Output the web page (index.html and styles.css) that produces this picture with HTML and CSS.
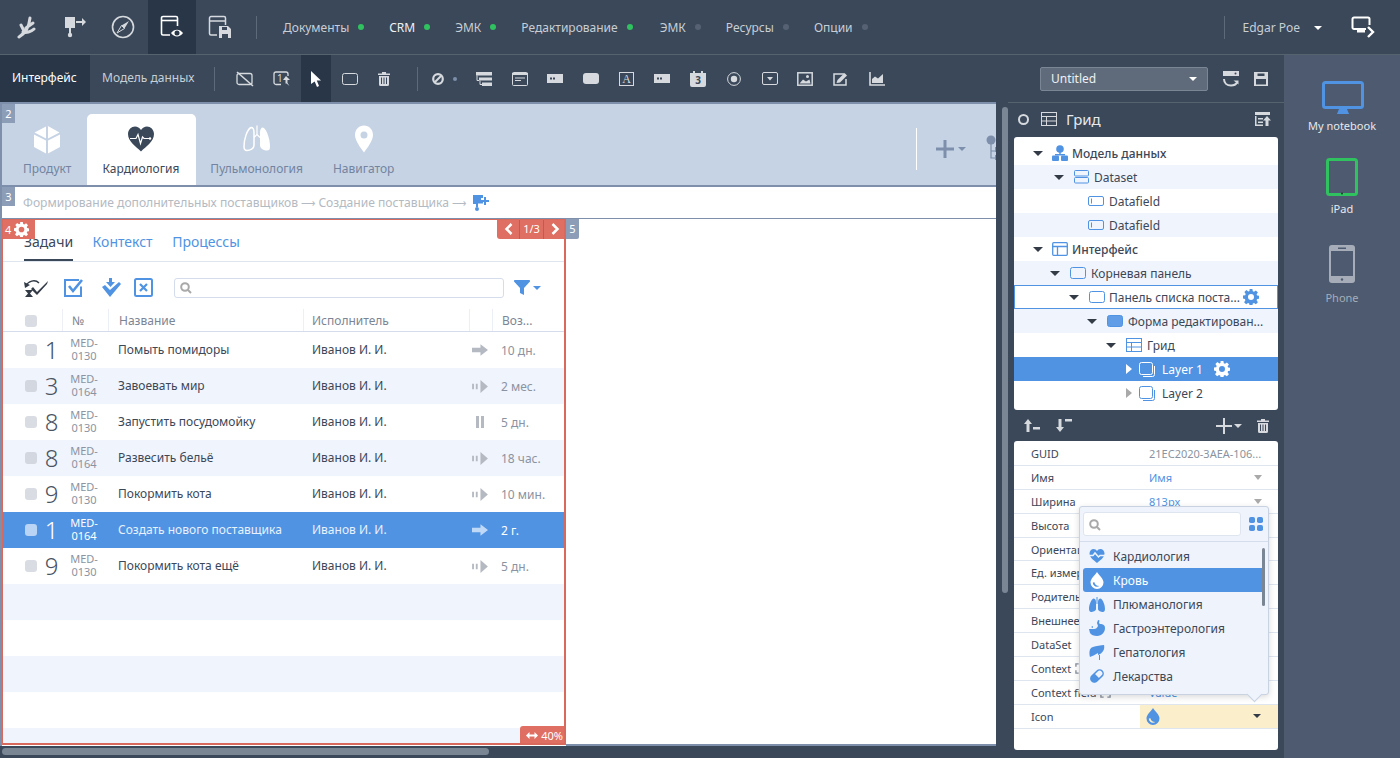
FILE: index.html
```html
<!DOCTYPE html>
<html lang="ru">
<head>
    <meta charset="UTF-8">
    <title>Редактор интерфейса</title>
    <link rel="stylesheet" href="styles.css">
</head>
<body>
<svg class="sprite" xmlns="http://www.w3.org/2000/svg">
    <symbol id="i-panel" viewBox="0 0 16 12"><rect x="0.5" y="0.5" width="15" height="11" rx="2" fill="none" stroke="currentColor"/></symbol>
    <symbol id="i-field" viewBox="0 0 16 10"><rect x="0.5" y="0.5" width="15" height="9" rx="1.5" fill="none" stroke="currentColor"/><path d="M3.5 2.5v5" stroke="currentColor"/></symbol>
    <symbol id="i-layer" viewBox="0 0 16 15"><rect x="0.5" y="0.5" width="13" height="12" rx="2" fill="none" stroke="currentColor"/><path d="M15.5 4v8.500a2 2 0 0 1-2 2H4" fill="none" stroke="currentColor"/></symbol>
    <symbol id="i-grid" viewBox="0 0 16 14"><rect x="0.5" y="0.5" width="15" height="13" fill="none" stroke="currentColor"/><path d="M0 4.500h16M0 9h16M5.500 4.500V14" stroke="currentColor"/></symbol>
    <symbol id="i-gear" viewBox="0 0 16 16"><path fill-rule="evenodd" fill="currentColor" d="M6.600 0h2.800l.4 2.200 1.200.5 1.900-1.300 2 2-1.300 1.900.5 1.200 2.200.4v2.800l-2.200.4-.5 1.200 1.300 1.900-2 2-1.900-1.300-1.200.5-.4 2.200H6.600l-.4-2.200-1.200-.5-1.900 1.300-2-2 1.300-1.900-.5-1.200L0 9.400V6.600l2.200-.4.5-1.200L1.400 3.100l2-2 1.900 1.300 1.200-.5zM8 5a3 3 0 1 0 0 6 3 3 0 0 0 0-6z"/></symbol>
    <symbol id="i-search" viewBox="0 0 12 12"><circle cx="5" cy="5" r="3.800" fill="none" stroke="currentColor" stroke-width="2"/><path d="M8 8l3 3" stroke="currentColor" stroke-width="2"/></symbol>
    <symbol id="i-drop" viewBox="0 0 14 17"><path fill-rule="evenodd" fill="currentColor" d="M7 0c2 3.500 6.500 6.500 6.500 10.500a6.500 6.500 0 0 1-13 0C.5 6.500 5 3.500 7 0zM2.800 10.500c0 2.600 1.900 4.300 4.200 4.300.9 0 1.700-.3 2.300-.8-2.800-.1-4.500-1.500-4.900-3.700z"/></symbol>
    <symbol id="i-move" viewBox="0 0 17 12"><path fill="currentColor" d="M0 3.500h9V0l8 6-8 6V8.500H0z"/></symbol>
    <symbol id="i-slow" viewBox="0 0 17 14"><path fill="currentColor" d="M0 4h2v6H0zM4 4h2v6H4zM9 0l8 7-8 7z"/></symbol>
    <symbol id="i-pause" viewBox="0 0 10 12"><path fill="currentColor" d="M1 0h3v12H1zM6 0h3v12H6z"/></symbol>
    <symbol id="i-trash" viewBox="0 0 12 14"><path fill="currentColor" d="M4 0h4v1.500h4V3H0V1.500h4zM1 4h10v8.500a1.500 1.500 0 0 1-1.500 1.500h-7A1.500 1.500 0 0 1 1 12.500zm2 1.500V12h1V5.500zm2.500 0V12h1V5.500zm2.500 0V12h1V5.500z"/></symbol>
    <symbol id="i-chip" viewBox="0 0 16 9"><path fill-rule="evenodd" fill="currentColor" d="M0 0h16v9H0zM3 3.500v2h2v-2zm3 0v2h2v-2z"/></symbol>
    <symbol id="i-bracket" viewBox="0 0 12 12"><path d="M4 1H1v3M8 1h3v3M4 11H1V8M8 11h3V8" fill="none" stroke="currentColor" stroke-width="1.500"/></symbol>
</svg>

<header class="topbar">
    <div class="ico-btn"><svg width="22" height="24" viewBox="0 0 22 24" fill="none" stroke="#d6dade" stroke-width="3" stroke-linecap="round"><path d="M3 22c5-3 10-9 11-19M10 13l7-5M7 17c3 1 8 0 11-3M5 10l3 6"/></svg></div>
    <div class="ico-btn"><svg width="24" height="24" viewBox="0 0 24 24" fill="#d6dade"><path d="M2 2h10v11H2z"/><path d="M6 13h2v6H6z"/><circle cx="7" cy="20" r="2.200"/><path d="M13 6h6V3l4 4-4 4V8h-6z"/></svg></div>
    <div class="ico-btn"><svg width="24" height="24" viewBox="0 0 24 24"><circle cx="12" cy="12" r="10.500" fill="none" stroke="#d6dade" stroke-width="1.600"/><path d="M18 6l-4.500 7.500L10.500 10.500z" fill="#d6dade"/><path d="M6 18l4.500-7.500 3 3z" fill="none" stroke="#d6dade"/></svg></div>
    <div class="ico-btn is-active"><svg width="24" height="24" viewBox="0 0 24 24" fill="none" stroke="#fff" stroke-width="1.600"><path d="M10 20H3a1.500 1.500 0 0 1-1.500-1.500V3A1.500 1.500 0 0 1 3 1.500h13A1.500 1.500 0 0 1 17.500 3v8"/><path d="M2 5.500h15"/><path d="M11 18c3-4.500 9-4.500 12 0-3 4.500-9 4.500-12 0z" fill="#fff" stroke="none"/><circle cx="17" cy="18" r="2.500" fill="#283648" stroke="none"/></svg></div>
    <div class="ico-btn"><svg width="24" height="24" viewBox="0 0 24 24" fill="none" stroke="#d6dade" stroke-width="1.500"><path d="M9 20H3a1.500 1.500 0 0 1-1.500-1.500V3A1.500 1.500 0 0 1 3 1.500h13A1.500 1.500 0 0 1 17.500 3v7"/><path d="M2 6h15"/><path d="M11 11h9l3 3v9H11z" fill="#d6dade" stroke="none"/><path d="M14 12h5v3h-5zM14 19h6v4h-6z" fill="#3a4859" stroke="none"/></svg></div>
    <div class="vline top-line"></div>
    <nav class="modules">
        <a class="module">Документы<i class="dot on"></i></a>
        <a class="module is-lit">CRM<i class="dot on"></i></a>
        <a class="module">ЭМК<i class="dot on"></i></a>
        <a class="module">Редактирование<i class="dot on"></i></a>
        <a class="module">ЭМК<i class="dot"></i></a>
        <a class="module">Ресурсы<i class="dot"></i></a>
        <a class="module">Опции<i class="dot"></i></a>
    </nav>
    <div class="user">
        <div class="vline"></div>
        <span class="user-name">Edgar Poe</span>
        <i class="caret"></i>
        <svg class="logout" width="24" height="24" viewBox="0 0 24 24" fill="none" stroke="#fff" stroke-width="2"><path d="M15 14H3a1.500 1.500 0 0 1-1.500-1.500V4A1.500 1.500 0 0 1 3 2.500h14A1.500 1.500 0 0 1 18.500 4v6"/><path d="M6 16h8" stroke-width="3"/><path d="M17 12l5 5-5 5" stroke-width="2.400"/></svg>
    </div>
</header>

<div class="workspace">
    <div class="editor">
        <div class="toolbar">
            <a class="mode is-active">Интерфейс</a>
            <a class="mode">Модель данных</a>
            <div class="vline"></div>
            <div class="tool t-first"><svg width="18" height="16" viewBox="0 0 18 16" fill="none" stroke="#d6dade" stroke-width="1.300"><rect x="1" y="2.500" width="15" height="11" rx="2"/><path d="M1 1l16 14" stroke-width="1.600"/></svg></div>
            <div class="tool t-second"><svg width="18" height="16" viewBox="0 0 18 16" fill="none" stroke="#d6dade" stroke-width="1.300"><path d="M8 13.500H3a2 2 0 0 1-2-2V3a2 2 0 0 1 2-2h10a2 2 0 0 1 2 2v2"/><text x="4" y="10.500" class="ico-text" fill="#d6dade" stroke="none">1</text><path d="M13 5l4 4h-2.500v3l2 3-3-2.500h-1V9H10z" fill="#d6dade" stroke="none"/></svg></div>
            <div class="tool is-active"><svg width="12" height="16" viewBox="0 0 12 16" fill="#fff"><path d="M1 0l10 9.500H6.800L9 15l-2 1-2.300-5.500L1 13z"/></svg></div>
            <div class="tool"><svg class="c-light" width="16" height="12"><use href="#i-panel"/></svg></div>
            <div class="tool"><svg class="c-light" width="12" height="14"><use href="#i-trash"/></svg></div>
            <div class="vline vline-tools"></div>
            <div class="tool-ban"><svg width="12" height="12" viewBox="0 0 12 12"><circle cx="6" cy="6" r="4.800" fill="none" stroke="#d6dade" stroke-width="2.200"/><path d="M3 9l6-6" stroke="#d6dade" stroke-width="2"/></svg><i class="mini-dot"></i></div>
            <div class="tool-row">
                <div class="tool"><svg width="16" height="14" viewBox="0 0 16 14" fill="#d6dade"><path d="M0 0h16v3.500H0zM3 5.500h13V8.500H3zM6 10.500h10V14H6z"/><path d="M1 3.500v5h2M4 8.500v4h2" fill="none" stroke="#d6dade"/></svg></div>
                <div class="tool"><svg width="16" height="14" viewBox="0 0 16 14" fill="none" stroke="#d6dade"><rect x="0.500" y="0.500" width="15" height="13" rx="1"/><path d="M0 2h16" stroke-width="2"/><path d="M3 6h10M3 8.500h6"/></svg></div>
                <div class="tool"><svg class="c-light" width="16" height="9"><use href="#i-chip"/></svg></div>
                <div class="tool"><svg width="16" height="11" viewBox="0 0 16 11" fill="#d6dade"><rect width="16" height="11" rx="3"/></svg></div>
                <div class="tool"><svg width="15" height="14" viewBox="0 0 15 14"><rect x="0.500" y="0.500" width="14" height="13" fill="none" stroke="#d6dade"/><text x="7.500" y="11" text-anchor="middle" class="ico-serif" fill="#d6dade">A</text></svg></div>
                <div class="tool"><svg class="c-light" width="16" height="9"><use href="#i-chip"/></svg></div>
                <div class="tool"><svg width="16" height="16" viewBox="0 0 16 16" fill="#d6dade"><path d="M0 2h3V0h2v2h6V0h2v2h3v12a2 2 0 0 1-2 2H2a2 2 0 0 1-2-2z"/><text x="8" y="13" text-anchor="middle" class="ico-text" fill="#3a4859" font-weight="700">3</text></svg></div>
                <div class="tool"><svg width="14" height="14" viewBox="0 0 14 14"><circle cx="7" cy="7" r="6.400" fill="none" stroke="#d6dade"/><circle cx="7" cy="7" r="3.200" fill="#d6dade"/></svg></div>
                <div class="tool"><svg width="16" height="13" viewBox="0 0 16 13"><rect x="0.500" y="0.500" width="15" height="12" rx="1.500" fill="none" stroke="#d6dade"/><path d="M5 5h6L8 8.500z" fill="#d6dade"/></svg></div>
                <div class="tool"><svg width="16" height="14" viewBox="0 0 16 14"><rect x="0.800" y="0.800" width="14.400" height="12.400" fill="none" stroke="#d6dade" stroke-width="1.500"/><path d="M2.500 11.500l3.500-4 3 2 3.500-2 1 4z" fill="#d6dade"/><circle cx="10.500" cy="4.500" r="1.500" fill="#d6dade"/></svg></div>
                <div class="tool"><svg width="16" height="14" viewBox="0 0 16 14"><path d="M11 2H1v11h12V7" fill="none" stroke="#d6dade" stroke-width="1.500"/><path d="M3.500 11l1-3 7-7 2.500 2.500-7 7z" fill="#d6dade"/></svg></div>
                <div class="tool"><svg width="16" height="14" viewBox="0 0 16 14"><path d="M1 0v13h15" fill="none" stroke="#d6dade" stroke-width="1.600"/><path d="M3 11V7l3-2.500 3 2L14 2v9z" fill="#d6dade"/></svg></div>
            </div>
            <div class="doc-tools">
                <div class="doc-select">Untitled<i class="caret"></i></div>
                <svg width="16" height="16" viewBox="0 0 16 16" fill="none" stroke="#d6dade"><path d="M0 0h16v5H0z" fill="#d6dade" stroke="none"/><circle cx="12.500" cy="2.500" r="1" fill="#3a4859" stroke="none"/><path d="M1 8c0 4 3 6.500 7 6.500 2.500 0 5-1 6-3" stroke-width="2"/><path d="M10.500 9.500h5v4z" fill="#d6dade" stroke="none"/></svg>
                <svg width="14" height="14" viewBox="0 0 14 14" fill="#d6dade"><path fill-rule="evenodd" d="M0 0h14v14H0zM3.500 1.500V4h7V1.500zM2 7v5.500h10V7z"/></svg>
            </div>
        </div>

        <div class="stage">
            <main class="canvas">
                <section class="ribbon">
                    <span class="tag">2</span>
                    <a class="app-tab tab-product">
                        <svg width="28" height="28" viewBox="0 0 28 28" fill="#fff"><path d="M14 0l12.500 7L15 13V1zM1.500 7L13 1v12zM1 9l12 6v13L1 21.500zM27 9v12.500L15 28V15z"/></svg>
                        Продукт
                    </a>
                    <a class="app-tab is-active">
                        <svg width="28" height="28" viewBox="0 0 28 28"><path d="M14 26C9 21 1 16 1 8.500 1 4 4.500 1 8 1c2.500 0 4.500 1.200 6 3.500C15.500 2.200 17.500 1 20 1c3.500 0 7 3 7 7.500C27 16 19 21 14 26z" fill="#3a4859"/><path d="M3 13h6l2-4 2.500 9 2-6.500 1.500 1.500h6" fill="none" stroke="#fff" stroke-width="1.200"/><circle cx="23" cy="13" r="1.200" fill="#fff"/></svg>
                        Кардиология
                    </a>
                    <a class="app-tab tab-pulmo">
                        <svg width="28" height="28" viewBox="0 0 28 28"><path d="M8 2C4 4 1 14 1 21c0 3 1 4 3 4 3 0 7-2 7-5V7C11 4 10 2 8 2z" fill="none" stroke="#fff" stroke-width="1.500"/><path d="M20 2c4 2 7 12 7 19 0 3-1 4-3 4-3 0-7-2-7-5V7c0-3 1-5 3-5z" fill="#fff"/><path d="M14 0v9l-3 3M14 9l3 3" fill="none" stroke="#fff" stroke-width="1.200"/></svg>
                        Пульмонология
                    </a>
                    <a class="app-tab">
                        <svg width="20" height="28" viewBox="0 0 20 28"><path fill-rule="evenodd" fill="#fff" d="M10 0c5 0 9 4 9 9.500C19 15 13 23 10 27 7 23 1 15 1 9.500 1 4 5 0 10 0zm0 6a3.500 3.500 0 1 0 0 7 3.500 3.500 0 0 0 0-7z"/></svg>
                        Навигатор
                    </a>
                    <div class="ribbon-tools">
                        <i class="ribbon-line"></i>
                        <svg width="20" height="20" viewBox="0 0 20 20" fill="#7d8fab"><path d="M8.500 1h3v7.500H19v3h-7.500V19h-3v-7.500H1v-3h7.500z"/></svg>
                        <i class="caret caret-sm"></i>
                        <svg class="ribbon-tree" width="18" height="26" viewBox="0 0 18 26" fill="none" stroke="#7d8fab" stroke-width="1.200"><circle cx="5" cy="5" r="4.500" fill="#7d8fab" stroke="none"/><path d="M5 9v14h6M5 16h6"/><path d="M9 12h6v5H9zM9 20h6v5H9z" fill="#7d8fab" stroke="none"/></svg>
                    </div>
                </section>

                <section class="crumbs">
                    <span class="tag">3</span>
                    <span>Формирование дополнительных поставщиков <span class="arrow">⟶</span> Создание поставщика <span class="arrow">⟶</span></span>
                    <svg class="crumb-icon" width="16" height="16" viewBox="0 0 16 16" fill="#5093e3"><path d="M0 0h10v3H8v3h2v2.500H5V12H3V9H0z"/><path d="M11 2h2v3h3v2h-3v3h-2V7H8V5h3z"/><circle cx="4" cy="14" r="2"/></svg>
                </section>

                <div class="split">
                    <section class="tasks">
                        <div class="tag tag-red tag-gear">4 <svg width="15" height="15"><use href="#i-gear"/></svg></div>
                        <div class="pager">
                            <span class="pager-btn"><svg width="9" height="12" viewBox="0 0 9 12" fill="none" stroke="#fff" stroke-width="2.500"><path d="M7.500 1l-5 5 5 5"/></svg></span>
                            <span class="pager-num">1/3</span>
                            <span class="pager-btn"><svg width="9" height="12" viewBox="0 0 9 12" fill="none" stroke="#fff" stroke-width="2.500"><path d="M1.500 1l5 5-5 5"/></svg></span>
                        </div>
                        <div class="tabs">
                            <a class="tab is-active">Задачи</a>
                            <a class="tab">Контекст</a>
                            <a class="tab">Процессы</a>
                        </div>
                        <div class="actions">
                            <svg width="26" height="20" viewBox="0 0 26 20"><path d="M2 8c2-5 9-7 13-3" fill="none" stroke="#333b47" stroke-width="1.500"/><path d="M0 4l1 6 5-3z" fill="#333b47"/><path d="M1 12h8L6 15.500 9 19H1l3-3.500z" fill="#333b47"/><path d="M9 9l4 5 11-11-1 3-10 11-6-6z" fill="#333b47"/></svg>
                            <svg width="22" height="20" viewBox="0 0 22 20" fill="none" stroke="#5093e3" stroke-width="2"><path d="M18 8.500V18H2V2h14"/><path d="M6 8l4 5 9-11" stroke-width="2.600"/></svg>
                            <svg width="20" height="20" viewBox="0 0 20 20" fill="#5093e3"><path d="M8 0h3v4h3l-4.500 5L5 4h3z"/><path d="M1 9l3-2 5 5 9-8 2 2-11 13z"/></svg>
                            <svg width="19" height="19" viewBox="0 0 19 19" fill="none" stroke="#5093e3" stroke-width="2"><rect x="1" y="1" width="17" height="17" rx="1.500"/><path d="M6 6l7 7M13 6l-7 7" stroke-width="2.200"/></svg>
                            <div class="search-box"><svg class="c-gray" width="12" height="12"><use href="#i-search"/></svg></div>
                            <div class="filter"><svg width="16" height="15" viewBox="0 0 16 15" fill="#5093e3"><path d="M1 0h14a1 1 0 0 1 1 1.500L10 8v7L6 13V8L0 1.500A1 1 0 0 1 1 0z"/></svg><i class="caret caret-sm caret-blue"></i></div>
                        </div>
                        <div class="thead">
                            <div class="th"><i class="check"></i></div>
                            <div class="th th-line">№</div>
                            <div class="th th-line">Название</div>
                            <div class="th th-line">Исполнитель</div>
                            <div class="th th-line"></div>
                            <div class="th th-line">Воз...</div>
                        </div>
                        <div class="tbody">
                            <div class="row">
                                <i class="check"></i><span class="num">1</span><span class="code">MED-<br>0130</span><span class="name">Помыть помидоры</span><span class="who">Иванов И. И.</span>
                                <svg class="state" width="16" height="12"><use href="#i-move"/></svg><span class="age">10 дн.</span>
                            </div>
                            <div class="row">
                                <i class="check"></i><span class="num">3</span><span class="code">MED-<br>0164</span><span class="name">Завоевать мир</span><span class="who">Иванов И. И.</span>
                                <svg class="state" width="16" height="13"><use href="#i-slow"/></svg><span class="age">2 мес.</span>
                            </div>
                            <div class="row">
                                <i class="check"></i><span class="num">8</span><span class="code">MED-<br>0130</span><span class="name">Запустить посудомойку</span><span class="who">Иванов И. И.</span>
                                <svg class="state" width="16" height="12"><use href="#i-pause"/></svg><span class="age">5 дн.</span>
                            </div>
                            <div class="row">
                                <i class="check"></i><span class="num">8</span><span class="code">MED-<br>0164</span><span class="name">Развесить бельё</span><span class="who">Иванов И. И.</span>
                                <svg class="state" width="16" height="13"><use href="#i-slow"/></svg><span class="age">18 час.</span>
                            </div>
                            <div class="row">
                                <i class="check"></i><span class="num">9</span><span class="code">MED-<br>0130</span><span class="name">Покормить кота</span><span class="who">Иванов И. И.</span>
                                <svg class="state" width="16" height="13"><use href="#i-slow"/></svg><span class="age">10 мин.</span>
                            </div>
                            <div class="row is-selected">
                                <i class="check"></i><span class="num">1</span><span class="code">MED-<br>0164</span><span class="name">Создать нового поставщика</span><span class="who">Иванов И. И.</span>
                                <svg class="state" width="16" height="12"><use href="#i-move"/></svg><span class="age">2 г.</span>
                            </div>
                            <div class="row">
                                <i class="check"></i><span class="num">9</span><span class="code">MED-<br>0130</span><span class="name">Покормить кота ещё</span><span class="who">Иванов И. И.</span>
                                <svg class="state" width="16" height="13"><use href="#i-slow"/></svg><span class="age">5 дн.</span>
                            </div>
                            <div class="row"></div>
                            <div class="row"></div>
                            <div class="row"></div>
                            <div class="row"></div>
                            <div class="row"></div>
                        </div>
                        <div class="tag-size"><svg width="12" height="7" viewBox="0 0 12 7" fill="#fff"><path d="M0 3.500L3.500 0v2.500h5V0L12 3.500 8.500 7V4.500h-5V7z"/></svg> 40%</div>
                    </section>
                    <section class="side-pane"><span class="tag tag-tall">5</span></section>
                </div>
            </main>

            <div class="vscroll"><i></i></div>

            <aside class="inspector">
                <div class="insp-head">
                    <i class="ring"></i>
                    <svg class="c-light" width="16" height="14"><use href="#i-grid"/></svg>
                    <span class="insp-title">Грид</span>
                    <svg class="insp-export" width="16" height="14" viewBox="0 0 16 14" fill="#d6dade"><path d="M0 0h15v3H0zM0 4h1.500v8.500H8V14H0zM3 6h5v1.500H3zM3 9.500h5V11H3z"/><path d="M12 4l4 4.500h-2.500V14h-3V8.500H8z"/></svg>
                </div>
                <div class="tree">
                    <div class="node lv1"><i class="tri"></i><svg width="16" height="16" viewBox="0 0 16 16" fill="#5093e3"><circle cx="8" cy="4" r="3.800"/><path d="M7.300 7h1.400v3H7.300zM3 9h10v1.500H3z"/><rect x="0" y="10.500" width="7" height="5.500" rx="1"/><rect x="9" y="10.500" width="7" height="5.500" rx="1"/></svg><b>Модель данных</b></div>
                    <div class="node lv2 alt"><i class="tri"></i><svg class="c-blue" width="15" height="14" viewBox="0 0 15 14" fill="none" stroke="currentColor"><rect x="0.500" y="0.500" width="14" height="5.500" rx="1"/><rect x="0.500" y="7.500" width="14" height="5.500" rx="1"/></svg>Dataset</div>
                    <div class="node lv3"><svg class="c-blue" width="16" height="10"><use href="#i-field"/></svg>Datafield</div>
                    <div class="node lv3 alt"><svg class="c-blue" width="16" height="10"><use href="#i-field"/></svg>Datafield</div>
                    <div class="node lv1"><i class="tri"></i><svg class="c-blue" width="16" height="14" viewBox="0 0 16 14" fill="none" stroke="currentColor" stroke-width="1.300"><rect x="0.700" y="0.700" width="14.600" height="12.600" rx="1"/><path d="M0 4.500h16M5.500 4.500V14"/></svg><b>Интерфейс</b></div>
                    <div class="node lv4 alt"><i class="tri"></i><svg class="c-blue" width="16" height="12"><use href="#i-panel"/></svg>Корневая панель</div>
                    <div class="node lv5 is-focus"><i class="tri"></i><svg class="c-blue" width="16" height="12"><use href="#i-panel"/></svg>Панель списка поста...<svg class="c-blue node-gear" width="16" height="16"><use href="#i-gear"/></svg></div>
                    <div class="node lv6 alt"><i class="tri"></i><svg class="c-blue" width="16" height="12" viewBox="0 0 16 12"><rect x="0.500" y="0.500" width="15" height="11" rx="2" fill="#5093e3" fill-opacity=".9" stroke="#5093e3"/></svg>Форма редактирован...</div>
                    <div class="node lv7"><i class="tri"></i><svg class="c-blue" width="16" height="14"><use href="#i-grid"/></svg>Грид</div>
                    <div class="node lv8 is-selected"><i class="tri tri-right"></i><svg width="16" height="15"><use href="#i-layer"/></svg>Layer 1<svg class="node-gear gear-gap" width="16" height="16"><use href="#i-gear"/></svg></div>
                    <div class="node lv8"><i class="tri tri-right tri-gray"></i><svg class="c-blue" width="16" height="15"><use href="#i-layer"/></svg>Layer 2</div>
                </div>
                <div class="tree-tools">
                    <svg width="16" height="13" viewBox="0 0 16 13" fill="#d6dade"><path d="M4 0l4 5H5.500v8h-3V5H0zM9 8h7v2.500H9z"/></svg>
                    <svg width="16" height="13" viewBox="0 0 16 13" fill="#d6dade"><path d="M4 13l4-5H5.500V0h-3v8H0zM9 0h7v2.500H9z"/></svg>
                    <span class="grow"></span>
                    <svg width="16" height="16" viewBox="0 0 16 16" fill="#d6dade"><path d="M7 0h2v7h7v2H9v7H7V9H0V7h7z"/></svg>
                    <i class="caret caret-sm caret-light"></i>
                    <svg class="c-light tools-trash" width="12" height="14"><use href="#i-trash"/></svg>
                </div>
                <div class="props">
                    <div class="prop"><span class="p-label">GUID</span><span class="p-guid">21EC2020-3AEA-106...</span></div>
                    <div class="prop"><span class="p-label">Имя</span><span class="p-value">Имя</span><i class="caret caret-gray"></i></div>
                    <div class="prop"><span class="p-label">Ширина</span><span class="p-value">813px</span><i class="caret caret-gray"></i></div>
                    <div class="prop"><span class="p-label">Высота</span></div>
                    <div class="prop"><span class="p-label">Ориентация</span></div>
                    <div class="prop"><span class="p-label">Ед. измерения</span></div>
                    <div class="prop"><span class="p-label">Родитель</span></div>
                    <div class="prop"><span class="p-label">Внешнее</span></div>
                    <div class="prop"><span class="p-label">DataSet</span></div>
                    <div class="prop"><span class="p-label">Context <svg class="bracket" width="11" height="11"><use href="#i-bracket"/></svg></span></div>
                    <div class="prop"><span class="p-label">Context field <svg class="bracket" width="11" height="11"><use href="#i-bracket"/></svg></span><span class="p-value">Value</span></div>
                    <div class="prop"><span class="p-label">Icon</span><span class="p-pick"><svg class="c-blue" width="14" height="17"><use href="#i-drop"/></svg><i class="caret caret-dark"></i></span></div>

                    <div class="popup">
                        <div class="popup-head">
                            <div class="popup-search"><svg class="c-gray" width="12" height="12"><use href="#i-search"/></svg></div>
                            <svg class="c-blue" width="14" height="14" viewBox="0 0 14 14" fill="currentColor"><rect width="6" height="6" rx="1.800"/><rect x="8" width="6" height="6" rx="1.800"/><rect y="8" width="6" height="6" rx="1.800"/><rect x="8" y="8" width="6" height="6" rx="1.800"/></svg>
                        </div>
                        <div class="popup-list">
                            <div class="pick"><svg class="c-blue" width="16" height="14" viewBox="0 0 16 14"><path d="M8 14C6 12 .5 9 .5 4.500.5 2 2.500 0 4.500 0 6 0 7.300.7 8 2c.7-1.300 2-2 3.500-2 2 0 4 2 4 4.500C15.500 9 10 12 8 14z" fill="currentColor"/><path d="M0 6.500h4l2-2.500 3.500 4 1.500-1.500h5" fill="none" stroke="#eff3fb" stroke-width="1.500"/></svg>Кардиология</div>
                            <div class="pick is-on"><svg width="14" height="17"><use href="#i-drop"/></svg>Кровь</div>
                            <div class="pick"><svg class="c-blue" width="16" height="15" viewBox="0 0 16 15" fill="currentColor"><path d="M4.500 1.500C2 2.500 0 8 0 12c0 2 1 3 2 3 2 0 5-1 5-3V5c0-2-1-3.500-2.500-3.500zM11.500 1.500C14 2.500 16 8 16 12c0 2-1 3-2 3-2 0-5-1-5-3V5c0-2 1-3.500 2.500-3.500z"/><path d="M7.500 0h1v7h-1z"/></svg>Плюманология</div>
                            <div class="pick"><svg class="c-blue" width="16" height="16" viewBox="0 0 16 16" fill="currentColor"><path d="M0 9h5c2 0 3-1 4-3L8 3l1-3 1.500.5L10 3l1 1c3 0 5 1 5 4 0 4-3 8-8 8-3 0-6-1-7-3z"/><path d="M2 7l2-1v2z"/></svg>Гастроэнтерология</div>
                            <div class="pick"><svg class="c-blue" width="16" height="15" viewBox="0 0 16 15" fill="currentColor"><path d="M1 12C0 8 0 3 4 2c3-1 8-2 11-2 1 4-1 8-6 10V8c-3 2-6 3-8 4z"/><path d="M10 10h1v5h-1z"/></svg>Гепатология</div>
                            <div class="pick"><svg width="16" height="16" viewBox="0 0 16 16"><g transform="rotate(-45 8 8)"><rect x="0.800" y="4.500" width="14.400" height="7" rx="3.500" fill="#eff3fb" stroke="#5093e3" stroke-width="1.500"/><path d="M8 4.500H4.300a3.500 3.500 0 0 0 0 7H8z" fill="#5093e3"/></g></svg>Лекарства</div>
                            <i class="popup-scroll"></i>
                        </div>
                        <i class="popup-arrow"></i>
                    </div>
                </div>
            </aside>
        </div>
        <div class="hscroll"><i></i></div>
    </div>

    <aside class="devices">
        <div class="device dev-wide">
            <svg width="42" height="34" viewBox="0 0 42 34" fill="none"><rect x="1.500" y="1.500" width="39" height="25" rx="2" stroke="#5093e3" stroke-width="3"/><path d="M2 26h38v1H2z" fill="#5093e3"/><path d="M17 28h8l2 5H15z" fill="#5093e3"/></svg>
            <span class="dev-name">My notebook</span>
        </div>
        <div class="device">
            <svg width="32" height="38" viewBox="0 0 32 38" fill="none"><rect x="1.500" y="1.500" width="29" height="35" rx="2" stroke="#2fc25f" stroke-width="3"/><circle cx="16" cy="35.500" r="1" fill="#1d3a2c"/></svg>
            <span class="dev-name">iPad</span>
        </div>
        <div class="device dev-off">
            <svg width="26" height="38" viewBox="0 0 26 38" fill="#a6adb8"><path fill-rule="evenodd" d="M3 0h20a3 3 0 0 1 3 3v32a3 3 0 0 1-3 3H3a3 3 0 0 1-3-3V3a3 3 0 0 1 3-3zM2 6v25h22V6zM9 2.500V4h8V2.500z"/><circle cx="13" cy="34.500" r="1.200" fill="#4d5a6f"/></svg>
            <span class="dev-name">Phone</span>
        </div>
    </aside>
</div>
</body>
</html>
```

FILE: styles.css
```css
* {
    box-sizing: border-box;
}
body {
    margin: 0;
    width: 1400px;
    height: 758px;
    overflow: hidden;
    font-family: "Noto Sans", "Open Sans", sans-serif;
    font-size: 12px;
    color: #3c4757;
    background-color: #3a4859;
}
i {
    display: block;
    font-style: normal;
}
svg {
    display: block;
    flex-shrink: 0;
}
.sprite {
    display: none;
}
.ico-text {
    font-family: "Noto Sans", sans-serif;
    font-size: 10px;
}
.ico-serif {
    font-family: "Liberation Serif", serif;
    font-size: 12px;
}
.c-light { color: #d6dade; }
.c-blue { color: #5093e3; }
.c-gray { color: #a9a9a9; }

.vline {
    width: 1px;
    height: 23px;
    background-color: #5d6a79;
}
.caret {
    width: 0;
    height: 0;
    flex-shrink: 0;
    border-left: 5px solid transparent;
    border-right: 5px solid transparent;
    border-top: 5px solid #fff;
}
.caret-sm {
    border-left-width: 4px;
    border-right-width: 4px;
    border-top: 4px solid #7d8fab;
}
.caret-blue { border-top-color: #5093e3; margin-left: 3px; }
.caret-light { border-top-color: #d6dade; margin-left: 2px; }
.caret-gray { border-top-color: #a9a9a9; }
.caret-dark { border-top-color: #333b47; }

/* верхняя панель */
.topbar {
    display: flex;
    align-items: center;
    height: 55px;
    border-bottom: 1px solid #56636f;
    padding-left: 3px;
}
.ico-btn {
    width: 48px;
    height: 54px;
    display: flex;
    align-items: center;
    justify-content: center;
}
.ico-btn:nth-child(3) {
    margin-right: 1px;
}
.ico-btn.is-active {
    background-color: #283648;
}
.top-line {
    margin-left: 12px;
}
.modules {
    display: flex;
    margin-left: 26px;
}
.module {
    display: flex;
    align-items: center;
    color: #c8ced6;
    margin-right: 25px;
}
.module:nth-child(4) {
    margin-right: 27px;
}
.module.is-lit {
    color: #eef0f3;
}
.dot {
    width: 6px;
    height: 6px;
    border-radius: 50%;
    background-color: #566273;
    margin-left: 9px;
}
.dot.on {
    background-color: #2fc25f;
}
.user {
    display: flex;
    align-items: center;
    margin-left: auto;
    padding-right: 25px;
}
.user-name {
    margin-left: 17px;
    color: #c8ced6;
}
.user .caret {
    margin-left: 14px;
    margin-top: 2px;
    border-left-width: 4px;
    border-right-width: 4px;
    border-top-width: 4px;
}
.logout {
    margin-left: 29px;
}

.workspace {
    display: flex;
    height: 703px;
}
.editor {
    width: 1284px;
}
.devices {
    width: 116px;
    background-color: #4d5a6f;
    padding-top: 26px;
}
.device {
    display: flex;
    flex-direction: column;
    align-items: center;
    height: 52px;
    margin-bottom: 35px;
    color: #e6e9ee;
    font-size: 11px;
}
.dev-wide {
    margin-bottom: 25px;
}
.dev-wide svg {
    margin-left: 2px;
}
.dev-name {
    margin-top: 5px;
    line-height: 15px;
}
.dev-wide .dev-name {
    margin-top: 3px;
}
.dev-off {
    color: #a6adb8;
}
.dev-off .dev-name {
    margin-top: 7px;
}

/* панель инструментов */
.toolbar {
    display: flex;
    align-items: center;
    height: 47px;
    color: #c8ced6;
}
.mode {
    height: 47px;
    line-height: 46px;
    padding: 0 12px;
    width: 124px;
}
.mode.is-active {
    background-color: #283648;
    color: #fff;
    width: 90px;
}
.toolbar > .vline {
    height: 24px;
}
.vline-tools {
    margin-left: 14px;
}
.tool {
    width: 30px;
    height: 47px;
    display: flex;
    align-items: center;
    justify-content: center;
    margin-right: 4px;
}
.tool.is-active {
    background-color: #283648;
}
.t-first {
    margin-left: 15px;
    margin-right: 7px;
}
.t-second {
    margin-right: 4px;
}
.tool-ban {
    display: flex;
    align-items: center;
    margin-left: 14px;
}
.mini-dot {
    width: 4px;
    height: 4px;
    border-radius: 50%;
    background-color: #7d8fab;
    margin-left: 9px;
}
.tool-row {
    display: flex;
    margin-left: 11px;
}
.tool-row .tool {
    width: 32px;
    margin-right: 3.7px;
}
.doc-tools {
    display: flex;
    align-items: center;
    margin-left: auto;
    padding-right: 16px;
}
.doc-tools svg {
    margin-left: 15px;
}
.doc-select {
    width: 168px;
    height: 24px;
    display: flex;
    align-items: center;
    justify-content: space-between;
    padding: 0 10px;
    background-color: #5f6b7b;
    border: 1px solid #7b8694;
    border-radius: 2px;
    color: #eef0f3;
}
.doc-select .caret {
    border-left-width: 4px;
    border-right-width: 4px;
    border-top-width: 4px;
}

/* рабочая область */
.stage {
    display: flex;
    height: 644px;
}
.canvas {
    width: 996px;
    overflow: hidden;
    border: 2px solid #7d8fab;
    border-width: 2px 0 0 2px;
    background-color: #fff;
}
.tag {
    position: absolute;
    left: 0;
    top: 0;
    width: 13px;
    height: 19px;
    background-color: #8c9db8;
    color: #fff;
    font-size: 11px;
    line-height: 19px;
    text-align: center;
}
.tag-tall {
    height: 20px;
    border-radius: 0 0 2px 0;
}
.ribbon {
    position: relative;
    display: flex;
    align-items: flex-end;
    height: 83px;
    padding-left: 6px;
    background-color: #c6d3e4;
    border-bottom: 2px solid #7d8fab;
}
.app-tab {
    display: flex;
    flex-direction: column;
    align-items: center;
    height: 71px;
    padding: 11px 15px 0;
    color: #7284a0;
    border-radius: 5px 5px 0 0;
}
.tab-product {
    padding-right: 16px;
}
.tab-pulmo {
    padding: 11px 15px 0 14px;
}
.app-tab svg {
    margin-bottom: 6px;
    height: 29px;
}
.app-tab.is-active {
    background-color: #fff;
    color: #3c4757;
    padding: 11px 17px 0 15px;
}
.ribbon-tools {
    display: flex;
    align-items: center;
    margin-left: auto;
    align-self: center;
    margin-top: 8px;
    width: 80px;
    flex-shrink: 0;
}
.ribbon-line {
    width: 1px;
    height: 42px;
    flex-shrink: 0;
    background-color: #fff;
    margin-right: 18px;
}
.ribbon-tools .caret-sm {
    margin-left: 3px;
}
.ribbon-tree {
    margin-left: 20px;
    margin-top: -2px;
}
.crumbs {
    position: relative;
    display: flex;
    align-items: center;
    height: 32px;
    padding-left: 21px;
    color: #b4bac2;
    font-size: 12.1px;
    border-bottom: 1px solid #7d8fab;
}
.arrow {
    font-size: 10px;
}
.crumb-icon {
    margin-left: 7px;
}
.split {
    display: flex;
    height: 527px;
}
.tasks {
    position: relative;
    width: 564px;
    height: 526px;
    border: 1px solid #d9695d;
    border-width: 1px 2px 2px 1px;
    overflow: hidden;
}
.side-pane {
    position: relative;
    flex: 1;
    border-bottom: 2px solid #7d8fab;
}
.tag-red {
    background-color: #df6f62;
}
.tag-gear {
    display: flex;
    align-items: center;
    gap: 3px;
    width: 33px;
    height: 20px;
    padding-left: 3px;
    top: -1px;
    left: -1px;
    z-index: 1;
}
.pager {
    position: absolute;
    top: -1px;
    right: -2px;
    display: flex;
    height: 20px;
    background-color: #df6f62;
    color: #fff;
    font-size: 11px;
    border-radius: 0 0 3px 3px;
    z-index: 1;
}
.pager-btn {
    width: 22px;
    display: flex;
    align-items: center;
    justify-content: center;
}
.pager-num {
    width: 25px;
    line-height: 20px;
    text-align: center;
    border-left: 1px solid #c9574b;
    border-right: 1px solid #c9574b;
}
.tag-size {
    position: absolute;
    right: -2px;
    bottom: -2px;
    display: flex;
    align-items: center;
    gap: 3px;
    height: 19px;
    padding: 0 3px 0 6px;
    background-color: #df6f62;
    color: #fff;
    font-size: 11px;
    border-radius: 3px 0 0 0;
}
.tabs {
    display: flex;
    height: 42px;
    padding-left: 21px;
    border-bottom: 1px solid #dfe5ef;
    font-size: 14px;
}
.tab {
    height: 41px;
    margin-right: 19.5px;
    line-height: 43px;
    color: #5093e3;
}
.tab.is-active {
    color: #3c4757;
    border-bottom: 2px solid #3a4859;
}
.actions {
    display: flex;
    align-items: center;
    height: 47px;
    padding: 4px 0 0 21px;
}
.actions svg {
    margin-right: 13px;
}
.actions svg:nth-child(2) {
    margin-right: 16px;
}
.actions svg:nth-child(4) {
    margin-right: 21px;
}
.search-box {
    width: 330px;
    height: 20px;
    padding: 3px 5px;
    border: 1px solid #d5dceb;
    border-radius: 3px;
}
.filter {
    display: flex;
    align-items: center;
    margin-left: 10px;
}
.filter svg {
    margin-right: 0;
}
.thead {
    display: grid;
    grid-template-columns: 59px 46px 195px 166px 23px 1fr;
    height: 23px;
    border-bottom: 1px solid #d5dceb;
    color: #7c8593;
}
.th {
    display: flex;
    align-items: center;
    padding-left: 9px;
    padding-top: 1px;
    height: 22px;
}
.th:first-child {
    padding-left: 22px;
}
.th:nth-child(3) {
    padding-left: 10px;
}
.th:nth-child(4) {
    padding-left: 8px;
}
.th-line {
    border-left: 1px solid #eceff5;
}
.check {
    width: 12px;
    height: 12px;
    border-radius: 3px;
    background-color: #d9dce2;
}
.row {
    display: grid;
    grid-template-columns: 12px 33px 28px 20px 194px 160px 29px 1fr;
    align-items: center;
    height: 36px;
    padding-left: 22px;
}
.row:nth-child(even) {
    background-color: #f0f4fc;
}
.row:nth-child(even) .check {
    background-color: #d2d7e0;
}
.num {
    font-size: 24px;
    font-weight: 300;
    line-height: 36px;
    text-align: center;
    padding-right: 4px;
    color: #4a5361;
}
.code {
    grid-column: 3;
    font-size: 11px;
    line-height: 13px;
    text-align: center;
    color: #8b93a0;
    margin-bottom: 2px;
}
.name {
    grid-column: 5;
    font-size: 12px;
    margin-bottom: 2px;
}
.who {
    margin-bottom: 2px;
}
.state {
    color: #b5b9c1;
}
.age {
    color: #8b93a0;
    font-size: 12px;
}
.row.is-selected {
    background-color: #5093e3;
    color: #fff;
}
.row.is-selected .check {
    background-color: #b9d4f5;
}
.row.is-selected .num,
.row.is-selected .code,
.row.is-selected .age {
    color: #fff;
}
.row.is-selected .who,
.row.is-selected .name {
    color: #e8f1fc;
}
.row.is-selected .state {
    color: #c0d9f7;
}

/* скроллы */
.vscroll {
    width: 12px;
    padding: 5px 0 0 6px;
}
.vscroll i {
    width: 6px;
    height: 486px;
    border-radius: 3px;
    background-color: #7b8695;
}
.hscroll {
    height: 12px;
    padding: 2px 0 0 2px;
}
.hscroll i {
    width: 487px;
    height: 7px;
    border-radius: 4px;
    background-color: #7b8695;
}

/* инспектор */
.inspector {
    width: 276px;
    padding: 0 6px;
    border-top: 1px solid #56636f;
    position: relative;
}
.insp-head {
    display: flex;
    align-items: center;
    height: 34px;
    padding: 0 0 2px 4px;
    color: #e6e9ee;
}
.ring {
    width: 11px;
    height: 11px;
    margin-right: 12px;
    border: 2px solid #d6dade;
    border-radius: 50%;
}
.insp-title {
    margin-left: 9px;
    font-size: 15px;
}
.insp-export {
    margin-left: auto;
    margin-right: 7px;
}
.tree {
    height: 273px;
    padding-top: 4px;
    background-color: #fff;
    border-radius: 3px;
}
.node {
    display: flex;
    align-items: center;
    height: 24px;
    color: #3c4757;
}
.node svg {
    margin-right: 5px;
}
.node b {
    font-weight: 500;
}
.alt {
    background-color: #f0f4fc;
}
.tri {
    width: 0;
    height: 0;
    margin-right: 10px;
    border-left: 5px solid transparent;
    border-right: 5px solid transparent;
    border-top: 5px solid #333b47;
}
.tri-right {
    margin-right: 7px;
    border-top: 5px solid transparent;
    border-bottom: 5px solid transparent;
    border-left: 6px solid #fff;
    border-right: none;
}
.tri-gray {
    border-left-color: #a9a9a9;
}
.lv1 { padding-left: 19px; }
.lv1 .tri { margin-right: 9px; }
.lv1 svg { margin-right: 4px; }
.lv2 { padding-left: 40px; }
.lv3 { padding-left: 74px; }
.lv4 { padding-left: 36px; }
.lv5 { padding-left: 55px; }
.lv6 { padding-left: 73px; }
.lv7 { padding-left: 92px; }
.lv8 { padding-left: 112px; }
.lv8 svg { margin-right: 7px; }
.is-focus {
    border: 1px solid #5093e3;
    padding-left: 54px;
}
.is-focus svg {
    margin-right: 4px;
}
.node .node-gear {
    margin-left: 3px;
}
.node .gear-gap {
    margin-left: 11px;
}
.node.is-selected {
    background-color: #5093e3;
    color: #fff;
}
.tree-tools {
    display: flex;
    align-items: center;
    height: 31px;
    padding: 0 9px 0 10px;
}
.tree-tools svg:nth-child(2) {
    margin-left: 16px;
}
.grow {
    flex: 1;
}
.tools-trash {
    margin-left: 15px;
}
.props {
    position: relative;
    height: 309px;
    background-color: #fff;
    border-radius: 3px;
    padding-top: 1px;
}
.prop {
    display: flex;
    align-items: center;
    height: 23.9px;
    padding-left: 17px;
    border-bottom: 1px solid #dfe5ef;
    font-size: 11px;
    white-space: nowrap;
}
.p-label {
    display: flex;
    align-items: center;
    gap: 4px;
    width: 118px;
    color: #3c4757;
}
.bracket {
    color: #8b93a0;
}
.p-guid {
    color: #8b93a0;
}
.p-value {
    color: #5093e3;
}
.prop > .caret {
    margin-left: auto;
    margin-right: 16px;
    border-left-width: 4px;
    border-right-width: 4px;
}
.p-pick {
    display: flex;
    align-items: center;
    justify-content: space-between;
    flex: 1;
    height: 23px;
    margin-left: -9px;
    padding: 0 17px 0 6px;
    background-color: #fbeecb;
}
.p-pick .caret {
    border-left-width: 4px;
    border-right-width: 4px;
    border-top-width: 4px;
}
.popup {
    position: absolute;
    left: 65px;
    top: 65px;
    width: 190px;
    height: 189px;
    background-color: #eff3fb;
    border: 1px solid #c8d2e0;
    border-radius: 3px;
    box-shadow: 0 2px 6px rgba(0, 0, 0, 0.15);
}
.popup-head {
    display: flex;
    align-items: center;
    gap: 8px;
    height: 35px;
    padding-left: 3px;
    border-bottom: 1px solid #d5dceb;
}
.popup-search {
    width: 158px;
    height: 24px;
    padding: 6px 5px;
    background-color: #fff;
    border: 1px solid #dfe5ef;
    border-radius: 3px;
}
.popup-list {
    position: relative;
    padding: 2px 3px 0;
}
.pick {
    display: flex;
    align-items: center;
    height: 24px;
    padding-left: 6px;
    color: #3c4757;
}
.pick svg {
    margin-right: 8px;
    width: 16px;
}
.pick.is-on {
    background-color: #5093e3;
    color: #fff;
    border-radius: 3px;
    width: 182px;
}
.popup-scroll {
    position: absolute;
    right: 3px;
    top: 6px;
    width: 3px;
    height: 58px;
    background-color: #7b8695;
    border-radius: 2px;
}
.popup-arrow {
    position: absolute;
    right: 8px;
    bottom: -6px;
    width: 11px;
    height: 11px;
    background-color: #eff3fb;
    border: solid #c8d2e0;
    border-width: 0 1px 1px 0;
    transform: rotate(45deg);
}
```
